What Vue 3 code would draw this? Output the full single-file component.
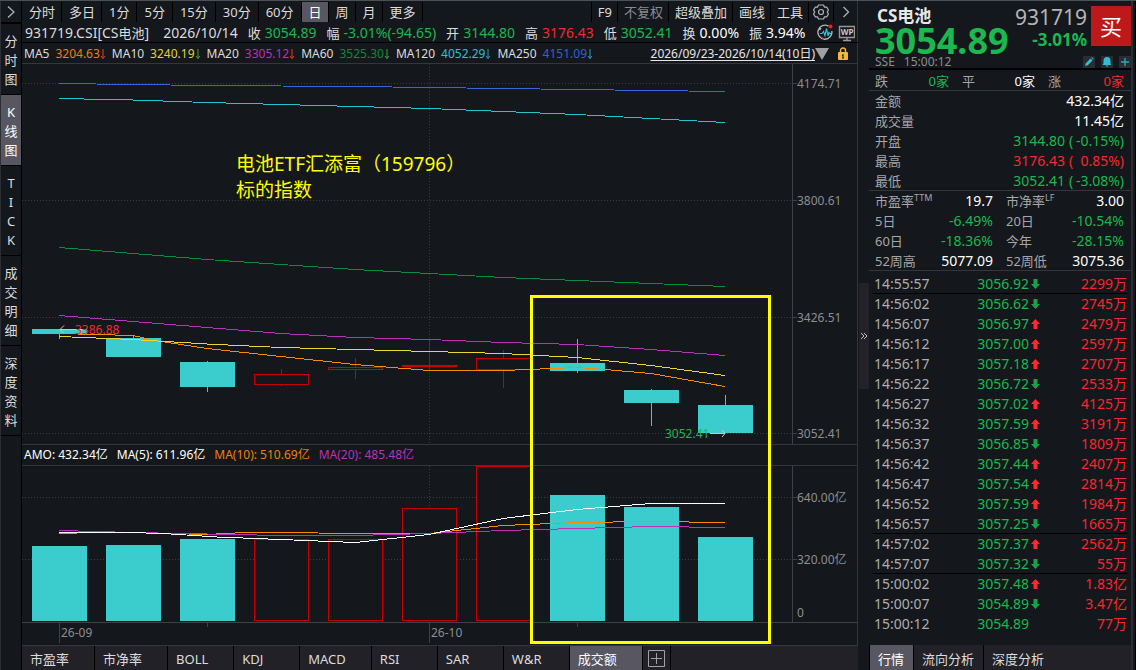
<script setup>
import { ref } from 'vue'

const periods = ['分时', '多日', '1分', '5分', '15分', '30分', '60分', '日', '周', '月', '更多']
const tools = ['F9', '不复权', '超级叠加', '画线', '工具']
const activePeriod = ref('日')

const views = ['分时图', 'K线图', 'TICK', '成交明细', '深度资料']
const activeView = ref('K线图')

const quote = [
  ['收', '3054.89', 'green'],
  ['幅', '-3.01%(-94.65)', 'green'],
  ['开', '3144.80', 'green'],
  ['高', '3176.43', 'red'],
  ['低', '3052.41', 'green'],
  ['换', '0.00%', 'white'],
  ['振', '3.94%', 'white'],
]

const averages = [
  ['MA5', '3204.63', 'orange', 'down-red'],
  ['MA10', '3240.19', 'yellow', 'down-green'],
  ['MA20', '3305.12', 'purple', 'down-red'],
  ['MA60', '3525.30', 'deep', 'down-green'],
  ['MA120', '4052.29', 'cyan', 'down-cyan'],
  ['MA250', '4151.09', 'blue', 'down-cyan'],
]

const priceAxis = [[83, '4174.71'], [200, '3800.61'], [317, '3426.51'], [433, '3052.41']]

const priceLines = [
  ['#3566dc', '59,83.5 133,84.5 207,85.5 281,86 355,86.5 429,87.5 503,88.5 577,89.5 651,90.5 725,91.5'],
  ['#22c4d4', '59,98.5 133,100 207,102.5 281,104.5 355,106.5 429,108.5 503,111.5 577,114.5 651,118.5 725,122.5'],
  ['#00913a', '59,247.5 133,253.5 207,259.5 281,264.5 355,269.5 429,273.5 503,277.5 577,280.5 651,283.5 725,286.5'],
  ['#bd2fbd', '59,315.5 133,321.5 207,327.5 281,333.5 355,337.5 429,339.5 503,342.5 577,344.5 651,349.5 725,355.5'],
  ['#ff8a00', '59,333.5 133,335.5 155,340.5 207,348.5 281,356.5 355,364.5 429,370.5 503,370.5 577,367.5 605,369.5 651,373.5 725,386.5'],
  ['#ead737', '59,336.5 133,339.5 207,344 281,347.5 355,349.5 429,351.5 503,353.5 577,357.5 651,365.5 725,375.5'],
]

// x is the left edge of the body; hi / lo are the ends of the wick
const candles = [
  { x: 32, top: 329, bottom: 334, hi: 329, lo: 339, up: false },
  { x: 106, top: 338, bottom: 357, hi: 335, lo: 357, up: false },
  { x: 180, top: 362, bottom: 387, hi: 361, lo: 392, up: false },
  { x: 254, top: 374, bottom: 385, hi: 369, lo: 386, up: true },
  { x: 328, top: 367, bottom: 370, hi: 358, lo: 379, up: true },
  { x: 402, top: 365, bottom: 367, hi: 341, lo: 370, up: true },
  { x: 476, top: 358, bottom: 370, hi: 350, lo: 388, up: true },
  { x: 550, top: 363, bottom: 371, hi: 339, lo: 373, up: false },
  { x: 624, top: 390, bottom: 403, hi: 389, lo: 426, up: false },
  { x: 698, top: 405, bottom: 433, hi: 395, lo: 433, up: false },
]

const amounts = [
  ['AMO: 432.34亿', 'white'],
  ['MA(5): 611.96亿', 'white'],
  ['MA(10): 510.69亿', 'orange'],
  ['MA(20): 485.48亿', 'purple'],
]

const volumes = [
  { x: 32, top: 546, up: false },
  { x: 106, top: 545, up: false },
  { x: 180, top: 539, up: false },
  { x: 254, top: 539, up: true },
  { x: 328, top: 539, up: true },
  { x: 402, top: 508, up: true },
  { x: 476, top: 466, up: true },
  { x: 550, top: 495, up: false },
  { x: 624, top: 507, up: false },
  { x: 698, top: 537, up: false },
]

const volumeLines = [
  ['#ff8a00', '59,533.5 96,532.5 133,532.5 207,534.5 244,532.5 281,532.5 355,533.5 429,533.5 503,525.5 577,522.5 651,521.5 725,522.5'],
  ['#bd2fbd', '59,530.5 133,532.5 207,534 281,535.5 355,535.5 429,533.5 503,530.5 577,528.5 651,526.5 725,527.5'],
  ['#ffffff', '59,532.5 133,532.5 171,534 217,537 281,539.5 355,542.5 429,534.5 503,518.5 577,509.5 651,503.5 725,503.5'],
]

const indicators = ['市盈率', '市净率', 'BOLL', 'KDJ', 'MACD', 'RSI', 'SAR', 'W&R', '成交额']
const activeIndicator = ref('成交额')

const summary = [
  ['金额', '432.34亿', '', 'white'],
  ['成交量', '11.45亿', '', 'white'],
  ['开盘', '3144.80', '-0.15%', 'green'],
  ['最高', '3176.43', '0.85%', 'red'],
  ['最低', '3052.41', '-3.08%', 'green'],
]

const ratios = [
  ['市盈率', 'TTM', '19.7', 'white'],
  ['市净率', 'LF', '3.00', 'white'],
  ['5日', '', '-6.49%', 'green'],
  ['20日', '', '-10.54%', 'green'],
  ['60日', '', '-18.36%', 'green'],
  ['今年', '', '-28.15%', 'green'],
  ['52周高', '', '5077.09', 'white'],
  ['52周低', '', '3075.36', 'white'],
]

const ticks = [
  ['14:55:57', '3056.92', 'down', '2299万', true],
  ['14:56:02', '3056.62', 'down', '2745万'],
  ['14:56:07', '3056.97', 'up', '2479万'],
  ['14:56:12', '3057.00', 'up', '2597万'],
  ['14:56:17', '3057.18', 'up', '2707万'],
  ['14:56:22', '3056.72', 'down', '2533万'],
  ['14:56:27', '3057.02', 'up', '4125万'],
  ['14:56:32', '3057.59', 'up', '3191万'],
  ['14:56:37', '3056.85', 'down', '1809万'],
  ['14:56:42', '3057.44', 'up', '2407万'],
  ['14:56:47', '3057.54', 'up', '2814万'],
  ['14:56:52', '3057.59', 'up', '1984万'],
  ['14:56:57', '3057.25', 'down', '1665万', true],
  ['14:57:02', '3057.37', 'up', '2562万'],
  ['14:57:07', '3057.32', 'down', '55万', true],
  ['15:00:02', '3057.48', 'up', '1.83亿'],
  ['15:00:07', '3054.89', 'down', '3.47亿'],
  ['15:00:12', '3054.89', '', '77万'],
]

const panelTabs = ['行情', '流向分析', '深度分析']
const activePanel = ref('行情')
</script>

<template>
  <div class="terminal">
    <nav class="rail">
      <button class="expand" aria-label="展开">
        <svg width="10" height="14" viewBox="0 0 10 14"><path d="M2 1.5l6 5.5-6 5.5" fill="none" stroke="#b0b0b4" stroke-width="1.3" /></svg>
      </button>
      <button v-for="v in views" :key="v" class="view" :class="{ active: v === activeView }" @click="activeView = v">
        <span v-for="(c, i) in v" :key="i">{{ c }}</span>
      </button>
    </nav>

    <main class="main">
      <div class="toolbar">
        <button v-for="p in periods" :key="p" :class="{ active: p === activePeriod, minutes: p.endsWith('分') }" @click="activePeriod = p">{{ p }}</button>
        <span class="spacer"></span>
        <button v-for="t in tools" :key="t" class="tool" :class="{ muted: t === '不复权' }">{{ t }}</button>
        <button class="icon" aria-label="设置">
          <svg width="16" height="16" viewBox="0 0 16 16" fill="none" stroke="#b4b4b8" stroke-width="1.2">
            <path d="M5.500 1h5l1 2.200h2.300L15.500 6l-1.300 2 1.300 2-1.700 2.800h-2.300l-1 2.200h-5l-1-2.200H2.200L.5 10l1.300-2L.5 6l1.700-2.800h2.300z" stroke-linejoin="round" />
            <circle cx="8" cy="8" r="2.500" />
          </svg>
        </button>
        <button class="icon" aria-label="更多工具">
          <svg width="8" height="12" viewBox="0 0 8 12"><path d="M1.500 1l5 5-5 5" fill="none" stroke="#b0b0b4" stroke-width="1.300" /></svg>
        </button>
      </div>

      <header class="quote">
        <span class="symbol">931719.CSI[CS<span class="han">电池</span>]</span>
        <time>2026/10/14</time>
        <span v-for="q in quote" :key="q[0]" class="pair"><span class="han">{{ q[0] }}</span><b :class="q[2]">{{ q[1] }}</b></span>
        <svg class="status" width="38" height="18" viewBox="0 0 38 18">
          <path d="M11.500 2.200A7 7 0 1 0 14.800 7M4 4l-1.500 2" fill="none" stroke="#b4b4b8" stroke-width="1.400" />
          <path d="M3 9.500h2l1.500-2 1.500 4 1.500-7 1.500 7.500 1-3.500 1 1h1" fill="none" stroke="#2cc0d4" stroke-width="1.200" />
          <circle cx="13.500" cy="2.500" r="2" fill="#ff1a1a" />
          <path d="M4 13l3 2" stroke="#f7282f" stroke-width="1.200" />
          <path d="M22.500 2.500h15v11h-15zM26 16.500h8M30 13.500v3" fill="none" stroke="#97979b" stroke-width="1.400" />
          <text x="30" y="11" font-size="8" font-weight="700" text-anchor="middle" fill="#c8c8ca">WP</text>
        </svg>
      </header>

      <div class="averages">
        <span v-for="m in averages" :key="m[0]" class="average">
          <span>{{ m[0] }}</span>
          <b :class="m[2]">{{ m[1] }}<svg width="6" height="12" viewBox="0 0 6 12" :class="m[3]"><path d="M3 1v9.500M1 8l2 2.500L5 8" fill="none" stroke="currentColor" /></svg></b>
        </span>
        <span class="spacer"></span>
        <a href="#range" class="range">2026/09/23-2026/10/14(10日)</a>
        <svg class="drop" width="14" height="12" viewBox="0 0 14 12"><path d="M0 0h14L7 12z" fill="#a0a0a2" /></svg>
        <svg width="10" height="14" viewBox="0 0 10 14">
          <path d="M2.500 6V3.500a2.500 2.500 0 0 1 5 0V6" fill="none" stroke="#f2b63c" stroke-width="1.400" />
          <rect y="5" width="10" height="8" rx="1" fill="#f2b63c" />
          <path d="M5 7v4M4 8.500h1M4 11h2" stroke="#14171b" />
        </svg>
      </div>

      <div class="charts">
        <svg class="chart" viewBox="22 64 836 380" role="img" aria-label="日K线">
          <g stroke="#3b3c40" stroke-dasharray="1 2" shape-rendering="crispEdges">
            <line v-for="a in priceAxis" :key="a[0]" x1="22" x2="792" :y1="a[0] + 0.5" :y2="a[0] + 0.5" />
            <line x1="429.5" x2="429.5" y1="64" y2="444" />
          </g>
          <g stroke="#3f4045" shape-rendering="crispEdges">
            <line x1="792.5" x2="792.5" y1="64" y2="444" />
            <line v-for="a in priceAxis" :key="a[0]" x1="792" x2="797" :y1="a[0] + 0.5" :y2="a[0] + 0.5" />
          </g>
          <text v-for="a in priceAxis" :key="a[1]" x="797" :y="a[0] + 5" class="axis">{{ a[1] }}</text>
          <g v-for="c in candles" :key="c.x" shape-rendering="crispEdges">
            <template v-if="c.up">
              <path :d="`M${c.x + 27.5} ${c.hi}V${c.top}M${c.x + 27.5} ${c.bottom}V${c.lo}`" stroke="#c80000" />
              <rect :x="c.x + 0.5" :y="c.top + 0.5" width="54" :height="c.bottom - c.top - 1" fill="none" stroke="#c80000" />
            </template>
            <template v-else>
              <path :d="`M${c.x + 27.5} ${c.hi}V${c.lo}`" stroke="#3bcdcd" />
              <rect :x="c.x" :y="c.top" width="55" :height="c.bottom - c.top" fill="#3bcdcd" />
            </template>
          </g>
          <polyline v-for="l in priceLines" :key="l[0]" :points="l[1]" :stroke="l[0]" fill="none" shape-rendering="crispEdges" />
          <path d="M60 329.500h22M64 325.500l-4 4 4 4" fill="none" stroke="#c8c8c8" />
          <text x="75" y="334" class="mark" fill="#f7282f">3386.88</text>
          <path d="M710 433.500h15M722 430l3 3.500-3 3.500" fill="none" stroke="#c8c8c8" />
          <text x="665" y="438" class="mark" fill="#1bb850">3052.41</text>
          <text x="236" y="171" class="note">电池ETF汇添富（159796）</text>
          <text x="236" y="197" class="note">标的指数</text>
        </svg>

        <div class="amounts"><span v-for="a in amounts" :key="a[0]" :class="a[1]">{{ a[0] }}</span></div>

        <svg class="chart" viewBox="22 466 836 179" role="img" aria-label="成交额">
          <g stroke="#3b3c40" stroke-dasharray="1 2" shape-rendering="crispEdges">
            <path d="M22 497.500H792M22 559.500H792M429.500 466V622" />
          </g>
          <g stroke="#3f4045" fill="none" shape-rendering="crispEdges">
            <path d="M22 622.500H858M792.500 466V622M792 497.500h5M792 559.500h5M59.500 623v20M429.500 623v20M207.500 623v4M577.500 623v4" />
          </g>
          <text x="797" y="502" class="axis">640.00亿</text>
          <text x="797" y="564" class="axis">320.00亿</text>
          <text x="797" y="617" class="axis">0</text>
          <text x="61" y="637" class="axis">26-09</text>
          <text x="431" y="637" class="axis">26-10</text>
          <g v-for="v in volumes" :key="v.x" shape-rendering="crispEdges">
            <rect v-if="v.up" :x="v.x + 0.5" :y="v.top + 0.5" width="54" :height="620 - v.top" fill="#14171b" stroke="#c80000" />
            <rect v-else :x="v.x" :y="v.top" width="55" :height="621 - v.top" fill="#3bcdcd" />
          </g>
          <polyline v-for="l in volumeLines" :key="l[0]" :points="l[1]" :stroke="l[0]" fill="none" shape-rendering="crispEdges" />
        </svg>
        <div class="highlight"></div>
      </div>

      <div class="indicators">
        <button v-for="n in indicators" :key="n" :class="{ active: n === activeIndicator }" @click="activeIndicator = n">{{ n }}</button>
        <button class="add" aria-label="添加指标">
          <svg width="17" height="17" viewBox="0 0 17 17"><path d="M.5.5h16v16H.5zM8.500 3v11M3 8.500h11" fill="none" stroke="#a0a0a4" /></svg>
        </button>
      </div>
    </main>

    <aside class="side">
      <button class="handle" aria-label="收起">
        <svg width="8" height="8" viewBox="0 0 8 8"><path d="M1 1l3 3-3 3M4 1l3 3-3 3" fill="none" stroke="#c0c0c4" /></svg>
      </button>
      <div class="panel">
        <section class="head">
          <div class="names">
            <h1>CS电池</h1>
            <strong class="last">3054.89</strong>
            <span class="venue"><span>SSE</span><span>15:00:12</span></span>
          </div>
          <div class="code">
            <span>931719</span>
            <strong>-3.01%</strong>
          </div>
          <div class="actions">
            <button class="buy">买</button>
            <div class="minis">
              <button aria-label="编辑"><svg width="12" height="12" viewBox="0 0 12 12"><path d="M2 10l.8-2.800L7.500 2.500l2 2L4.800 9.200zM8.200 1.800l.8-.5 1.700 1.700-.6.800z" fill="#2cc0d4" /></svg></button>
              <button aria-label="提醒"><svg width="12" height="12" viewBox="0 0 12 12"><path d="M6 1c2.500 0 3.500 1.800 3.500 4v2.500L10.500 9h-9l1-1.500V5c0-2.200 1-4 3.500-4zM4.500 9.500h3L6 11z" fill="#2cc0d4" /></svg></button>
              <button aria-label="添加"><svg width="12" height="12" viewBox="0 0 12 12"><path d="M6 2v8M2 6h8" stroke="#2ca6b8" stroke-width="1.400" /></svg></button>
            </div>
          </div>
        </section>

        <div class="breadth">
          <span>跌</span><b class="green">0家</b><span>平</span><b class="white">0家</b><span>涨</span><b class="red">0家</b>
        </div>

        <dl class="summary">
          <div v-for="s in summary" :key="s[0]">
            <dt>{{ s[0] }}</dt>
            <dd :class="s[3]">{{ s[1] }}<span v-if="s[2]" class="change"><i>(</i><i>{{ s[2] }})</i></span></dd>
          </div>
        </dl>

        <dl class="ratios">
          <div v-for="r in ratios" :key="r[0]">
            <dt>{{ r[0] }}<sup v-if="r[1]">{{ r[1] }}</sup></dt>
            <dd :class="r[3]">{{ r[2] }}</dd>
          </div>
        </dl>

        <table class="ticks">
          <tbody>
            <tr v-for="t in ticks" :key="t[0]" :class="{ split: t[4] }">
              <td class="time">{{ t[0] }}</td>
              <td class="green price">{{ t[1] }}</td>
              <td class="arrow">
                <svg v-if="t[2]" width="9" height="10" viewBox="0 0 9 10">
                  <path v-if="t[2] === 'up'" d="M4.500 0L9 5H6.500v5h-4V5H0z" fill="#ff2a30" />
                  <path v-else d="M4.500 10L9 5H6.500V0h-4v5H0z" fill="#18a24a" />
                </svg>
              </td>
              <td class="red amount">{{ t[3] }}</td>
            </tr>
          </tbody>
        </table>

        <div class="panel-tabs">
          <button v-for="p in panelTabs" :key="p" :class="{ active: p === activePanel }" @click="activePanel = p">{{ p }}</button>
        </div>
      </div>
    </aside>
  </div>
</template>

<style>
body {
  background: #14171b;
}
</style>

<style scoped>
* {
  box-sizing: border-box;
}
.terminal {
  display: grid;
  grid-template-columns: 22px minmax(0, 1fr) 278px;
  min-height: 100vh;
  border-top: 1px solid #4a5157;
  background: #14171b;
  color: #dcdcde;
  font: 13px/20px "Noto Sans", "Noto Sans CJK SC", sans-serif;
  white-space: nowrap;
}
button {
  margin: 0;
  padding: 0;
  border: 0;
  background: none;
  color: inherit;
  font: inherit;
}
b,
i {
  font-weight: 400;
  font-style: normal;
}
dl,
dd,
h1 {
  margin: 0;
}
svg {
  display: block;
  flex: none;
}
.spacer {
  flex: 1;
}
.green { color: #1bb850; }
.red { color: #f7282f; }
.white { color: #fff; }
.orange { color: #ef7f0a; }
.yellow { color: #e2d23a; }
.purple { color: #b733b9; }
.deep { color: #0b8a3c; }
.cyan { color: #2cc0d4; }
.blue { color: #3560d0; }

.rail {
  display: flex;
  flex-direction: column;
  border-left: 1px solid #2b2e33;
  border-right: 1px solid #000;
}
.expand {
  display: flex;
  align-items: center;
  justify-content: center;
  height: 23px;
  border-bottom: 2px solid #000;
}
.view {
  display: flex;
  flex-direction: column;
  align-items: center;
  padding: 8px 0 5px;
  border-bottom: 1px solid #000;
  line-height: 19px;
}
.active {
  background: #575661;
  color: #fff;
}

.main {
  display: flex;
  flex-direction: column;
  box-shadow: inset -1px 0 #35353a;
}
.toolbar {
  display: flex;
  height: 21px;
  padding-top: 1px;
}
.toolbar button {
  padding: 0 6px 0 7px;
  border-right: 1px solid #000;
}
.toolbar .minutes {
  padding: 0 7px;
}
.toolbar .tool,
.toolbar .icon {
  padding: 0 5px 0 6px;
  border-right: 0;
  border-left: 1px solid #000;
}
.toolbar .icon {
  display: grid;
  place-items: center;
  width: 25px;
  padding: 0;
}
.toolbar .muted {
  color: #8c8c90;
}
.quote {
  display: flex;
  align-items: center;
  gap: 10px;
  height: 21px;
  padding: 2px 3px 0;
  border-bottom: 1px solid #000;
  font-size: 14px;
}
.han {
  font-size: 13px;
}
.quote time {
  margin-left: 4px;
}
.pair {
  display: flex;
  gap: 4px;
}
.status {
  margin-left: auto;
}
.averages {
  display: flex;
  align-items: center;
  gap: 6px;
  height: 21px;
  padding: 2px 10px 0 2px;
  border-bottom: 1px solid #35353a;
  font-size: 12px;
}
.average {
  display: flex;
  gap: 6px;
}
.average b {
  display: flex;
  align-items: center;
}
.down-red { color: #e04020; }
.down-green { color: #4d9c3c; }
.down-cyan { color: #2c9cc8; }
.range {
  color: #e6e6e8;
  text-underline-offset: 2px;
}
.drop {
  margin: 0 3px 0 -6px;
}

.charts {
  position: relative;
}
.chart {
  width: 100%;
  height: auto;
}
.axis {
  fill: #8e8e92;
  font-size: 12px;
}
.mark {
  font-size: 12px;
}
.note {
  fill: #ff0;
  font-size: 19px;
}
.amounts {
  display: flex;
  align-items: center;
  gap: 9px;
  height: 22px;
  padding: 0 2px;
  border: solid #35353a;
  border-width: 1px 0;
  font-size: 12px;
}
.highlight {
  position: absolute;
  top: 231px;
  left: 508px;
  width: 241px;
  height: 349px;
  border: 3px solid #ff0;
  pointer-events: none;
}
.indicators {
  display: flex;
  flex: 1;
  border-top: 1px solid #35353a;
  background: #222127;
}
.indicators button {
  min-width: 66px;
  padding: 1px 25px 0 8px;
  border-right: 1px solid #000;
  text-align: left;
}
.indicators .add {
  display: grid;
  place-items: center;
  width: 28px;
  min-width: 0;
  padding: 0;
}

.side {
  display: grid;
  grid-template-columns: 11px minmax(0, 1fr);
  border-right: 1px solid #000;
}
.handle {
  display: grid;
  place-items: center;
  align-self: start;
  height: 106px;
  margin: 282px 0 0 1px;
  background: #232228;
}
.panel {
  display: flex;
  flex-direction: column;
  margin-right: 2px;
  border-right: 2px solid #2e2d33;
}
.head {
  display: flex;
  justify-content: space-between;
  height: 69px;
  padding: 5px 0 0 6px;
  border-bottom: 2px solid #000;
}
.names {
  display: flex;
  flex-direction: column;
  flex: 1;
}
.names h1 {
  padding-left: 2px;
  color: #e8e8ea;
  font-size: 17px;
  line-height: 20px;
}
.last {
  color: #1bb850;
  font-size: 36px;
  line-height: 30px;
}
.venue {
  display: flex;
  gap: 9px;
  color: #8e8e92;
  font-size: 12px;
  line-height: 12px;
}
.code {
  display: flex;
  flex-direction: column;
  align-items: flex-end;
  margin-right: 4px;
  color: #b4b4b6;
  font-size: 21px;
  line-height: 22px;
}
.code strong {
  color: #1bb850;
  font-size: 17px;
  line-height: 24px;
}
.actions {
  display: flex;
  flex-direction: column;
  gap: 10px;
  align-items: flex-end;
  width: 40px;
}
.buy {
  width: 40px;
  height: 40px;
  background: #bd191a;
  color: #fff;
  font-size: 22px;
}
.minis {
  display: flex;
  gap: 6px;
}
.minis button {
  background: #2c2b33;
}
.breadth {
  display: grid;
  grid-template-columns: 30px 44px 44px 42px 44px 1fr;
  height: 21px;
  padding: 1px 7px 0 6px;
  border-bottom: 1px solid #35353a;
  color: #a6a6aa;
}
.breadth b {
  text-align: right;
}
.breadth span:nth-of-type(n + 2) {
  padding-left: 13px;
}
.summary,
.ratios {
  padding: 0 7px 0 6px;
  box-shadow: inset 0 -1px #35353a;
}
.summary div,
.ratios div {
  display: flex;
  justify-content: space-between;
  height: 20px;
}
dt {
  color: #a6a6aa;
}
dd {
  display: flex;
  font-size: 14px;
}
.change {
  display: flex;
  justify-content: space-between;
  width: 59px;
  padding-left: 4px;
}
.ratios {
  display: grid;
  grid-template-columns: 118px 118px;
  justify-content: space-between;
}
sup {
  font-size: 9px;
  line-height: 0;
}
.ticks {
  width: 256px;
  margin: 3px 0 0 3px;
  border-collapse: collapse;
  table-layout: fixed;
  color: #aeaeb2;
  font-size: 14px;
}
.ticks tr {
  height: 20px;
}
.ticks .split {
  box-shadow: inset 0 -1px #000;
}
.ticks td {
  padding: 0 0 0 2px;
}
.ticks .time {
  width: 60px;
}
.ticks .price {
  width: 97px;
  text-align: right;
}
.ticks .arrow {
  width: 12px;
}
.ticks .amount {
  padding-right: 1px;
  text-align: right;
}
.panel-tabs {
  display: flex;
  height: 25px;
  margin-top: auto;
  border-left: 1px solid #000;
  background: #222127;
}
.panel-tabs button {
  padding: 2px 9px 0 8px;
  border-right: 1px solid #000;
}
.panel-tabs button:last-child {
  border-right: 0;
}
</style>
